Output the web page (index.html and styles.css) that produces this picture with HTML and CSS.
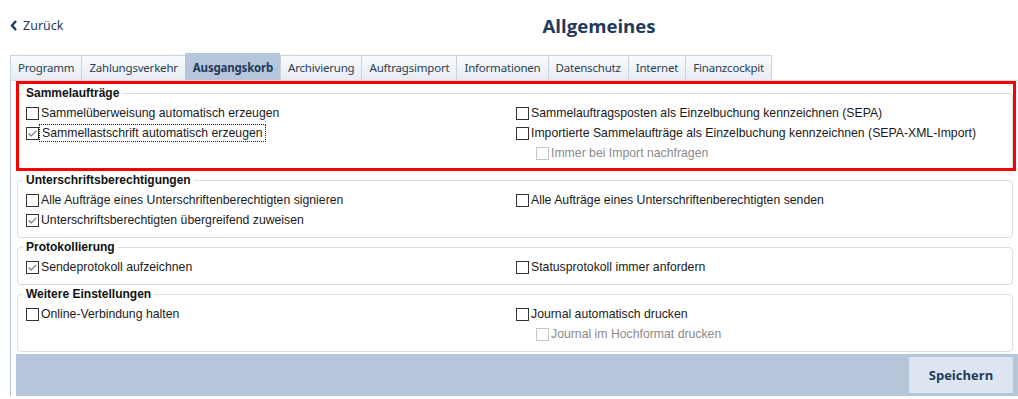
FILE: index.html
```html
<!DOCTYPE html>
<html lang="de">
<head>
<meta charset="utf-8">
<title>Allgemeines</title>
<link rel="stylesheet" href="styles.css">
</head>
<body>
<header class="header">
  <a class="back" href="#">
    <svg class="chev" width="8" height="11" viewBox="0 0 8 11"><path d="M6 1 L2 5.5 L6 10" fill="none" stroke="#1f3a5c" stroke-width="2.4"/></svg>
    <span>Zurück</span>
  </a>
  <h1 class="title">Allgemeines</h1>
</header>

<nav class="tabs">
  <div class="tab">Programm</div>
  <div class="tab">Zahlungsverkehr</div>
  <div class="tab active">Ausgangskorb</div>
  <div class="tab">Archivierung</div>
  <div class="tab">Auftragsimport</div>
  <div class="tab">Informationen</div>
  <div class="tab">Datenschutz</div>
  <div class="tab">Internet</div>
  <div class="tab last">Finanzcockpit</div>
</nav>

<main class="panel">
  <fieldset class="group">
    <legend>Sammelaufträge</legend>
    <div class="grid">
      <div class="row"><span class="cb"></span><span>Sammelüberweisung automatisch erzeugen</span></div>
      <div class="row"><span class="cb"></span><span>Sammelauftragsposten als Einzelbuchung kennzeichnen (SEPA)</span></div>
      <div class="row"><span class="cb checked"><svg viewBox="0 0 13 13"><path d="M2 6.5 L5 9.5 L11 3.5"/></svg></span><span class="focus">Sammellastschrift automatisch erzeugen</span></div>
      <div class="row"><span class="cb"></span><span>Importierte Sammelaufträge als Einzelbuchung kennzeichnen (SEPA-XML-Import)</span></div>
      <div class="row"></div>
      <div class="row sub disabled"><span class="cb"></span><span>Immer bei Import nachfragen</span></div>
    </div>
  </fieldset>

  <fieldset class="group">
    <legend>Unterschriftsberechtigungen</legend>
    <div class="grid">
      <div class="row"><span class="cb"></span><span>Alle Aufträge eines Unterschriftenberechtigten signieren</span></div>
      <div class="row"><span class="cb"></span><span>Alle Aufträge eines Unterschriftenberechtigten senden</span></div>
      <div class="row"><span class="cb checked"><svg viewBox="0 0 13 13"><path d="M2 6.5 L5 9.5 L11 3.5"/></svg></span><span>Unterschriftsberechtigten übergreifend zuweisen</span></div>
    </div>
  </fieldset>

  <fieldset class="group">
    <legend>Protokollierung</legend>
    <div class="grid">
      <div class="row"><span class="cb checked"><svg viewBox="0 0 13 13"><path d="M2 6.5 L5 9.5 L11 3.5"/></svg></span><span>Sendeprotokoll aufzeichnen</span></div>
      <div class="row"><span class="cb"></span><span>Statusprotokoll immer anfordern</span></div>
    </div>
  </fieldset>

  <fieldset class="group">
    <legend>Weitere Einstellungen</legend>
    <div class="grid">
      <div class="row"><span class="cb"></span><span>Online-Verbindung halten</span></div>
      <div class="row"><span class="cb"></span><span>Journal automatisch drucken</span></div>
      <div class="row"></div>
      <div class="row sub disabled"><span class="cb"></span><span>Journal im Hochformat drucken</span></div>
    </div>
  </fieldset>

  <div class="bar">
    <button class="save" type="button">Speichern</button>
  </div>

  <div class="highlight"></div>
</main>
</body>
</html>
```

FILE: styles.css
```css
* { box-sizing: border-box; }

html, body {
  margin: 0;
  padding: 0;
  background: #ffffff;
}

body {
  font-family: "Liberation Sans", Arial, sans-serif;
  color: #1a1a1a;
  width: 1018px;
  height: 399px;
  overflow: hidden;
}

/* Header */
.header {
  display: flex;
  align-items: center;
  height: 50px;
  padding-left: 10px;
}

.back {
  display: flex;
  align-items: center;
  gap: 5px;
  width: 170px;
  text-decoration: none;
  color: #1f3a5c;
  font-family: "Noto Sans", sans-serif;
  font-size: 12.5px;
}

.title {
  flex: 1;
  margin: 0;
  text-align: center;
  font-family: "Open Sans", sans-serif;
  font-weight: 700;
  font-size: 18.6px;
  color: #1f3a5c;
}

/* Tabs */
.tabs {
  display: flex;
  align-items: flex-end;
  margin-top: 3px;
  padding-left: 10px;
  height: 27px;
}

.tab {
  height: 25px;
  line-height: 23px;
  padding: 0 7px;
  border: 1px solid #c8d3de;
  border-right: none;
  border-bottom: none;
  background: linear-gradient(#f9fbfd, #e6ecf3);
  font-family: "Noto Sans", sans-serif;
  font-size: 11.5px;
  letter-spacing: -0.2px;
  color: #2c3e50;
  white-space: nowrap;
}

.tab.last { border-right: 1px solid #c8d3de; }

.tab.active {
  height: 27px;
  line-height: 27px;
  background: #b6c6da;
  border-color: #b6c6da;
  font-weight: 700;
  color: #1f3a5c;
}

/* Panel */
.panel {
  position: relative;
  margin-left: 10px;
  border-left: 1px solid #b9c6e2;
  border-top: 1px solid #d6dde5;
  padding: 5px 0 0 5px;
}

.group {
  margin: 0 5px 0 1px;
  padding: 3px 8px 7px 8px;
  border: 1px solid #d6dde4;
  border-radius: 4px;
  min-width: 0;
}

.group + .group { margin-top: 2px; }

.group legend {
  margin-left: -3px;
  padding: 0 3px;
  font-weight: 700;
  font-size: 12px;
  line-height: 14px;
  color: #111;
}

.grid {
  display: grid;
  grid-template-columns: 490px 1fr;
}

.row {
  display: flex;
  align-items: center;
  gap: 2px;
  height: 20px;
  font-size: 12.25px;
  color: #1a1a1a;
  white-space: nowrap;
}

.row.sub { padding-left: 20px; }

.cb {
  flex: none;
  width: 13px;
  height: 13px;
  border: 1px solid #333;
  background: #fff;
  display: flex;
}

.cb svg {
  width: 11px;
  height: 11px;
  fill: none;
  stroke: #666;
  stroke-width: 1.3;
}

.disabled { color: #8a8a8a; }
.disabled .cb { border-color: #c6c6c6; }

.focus {
  outline: 1px dotted #222;
  outline-offset: 1px;
  padding: 0 1px;
}

/* Bottom bar */
.bar {
  margin-top: 2px;
  height: 42px;
  background: #b6c6da;
  display: flex;
  justify-content: flex-end;
  padding: 3px 5px 0 0;
}

.save {
  width: 104px;
  height: 36px;
  border: none;
  background: #dde6f0;
  font-family: "Open Sans", sans-serif;
  font-weight: 700;
  font-size: 13px;
  color: #1f3a5c;
}

/* Red annotation overlay */
.highlight {
  position: absolute;
  left: 5px;
  top: 0;
  width: 1000px;
  height: 90px;
  border: 3px solid #ff0000;
  pointer-events: none;
}
```
